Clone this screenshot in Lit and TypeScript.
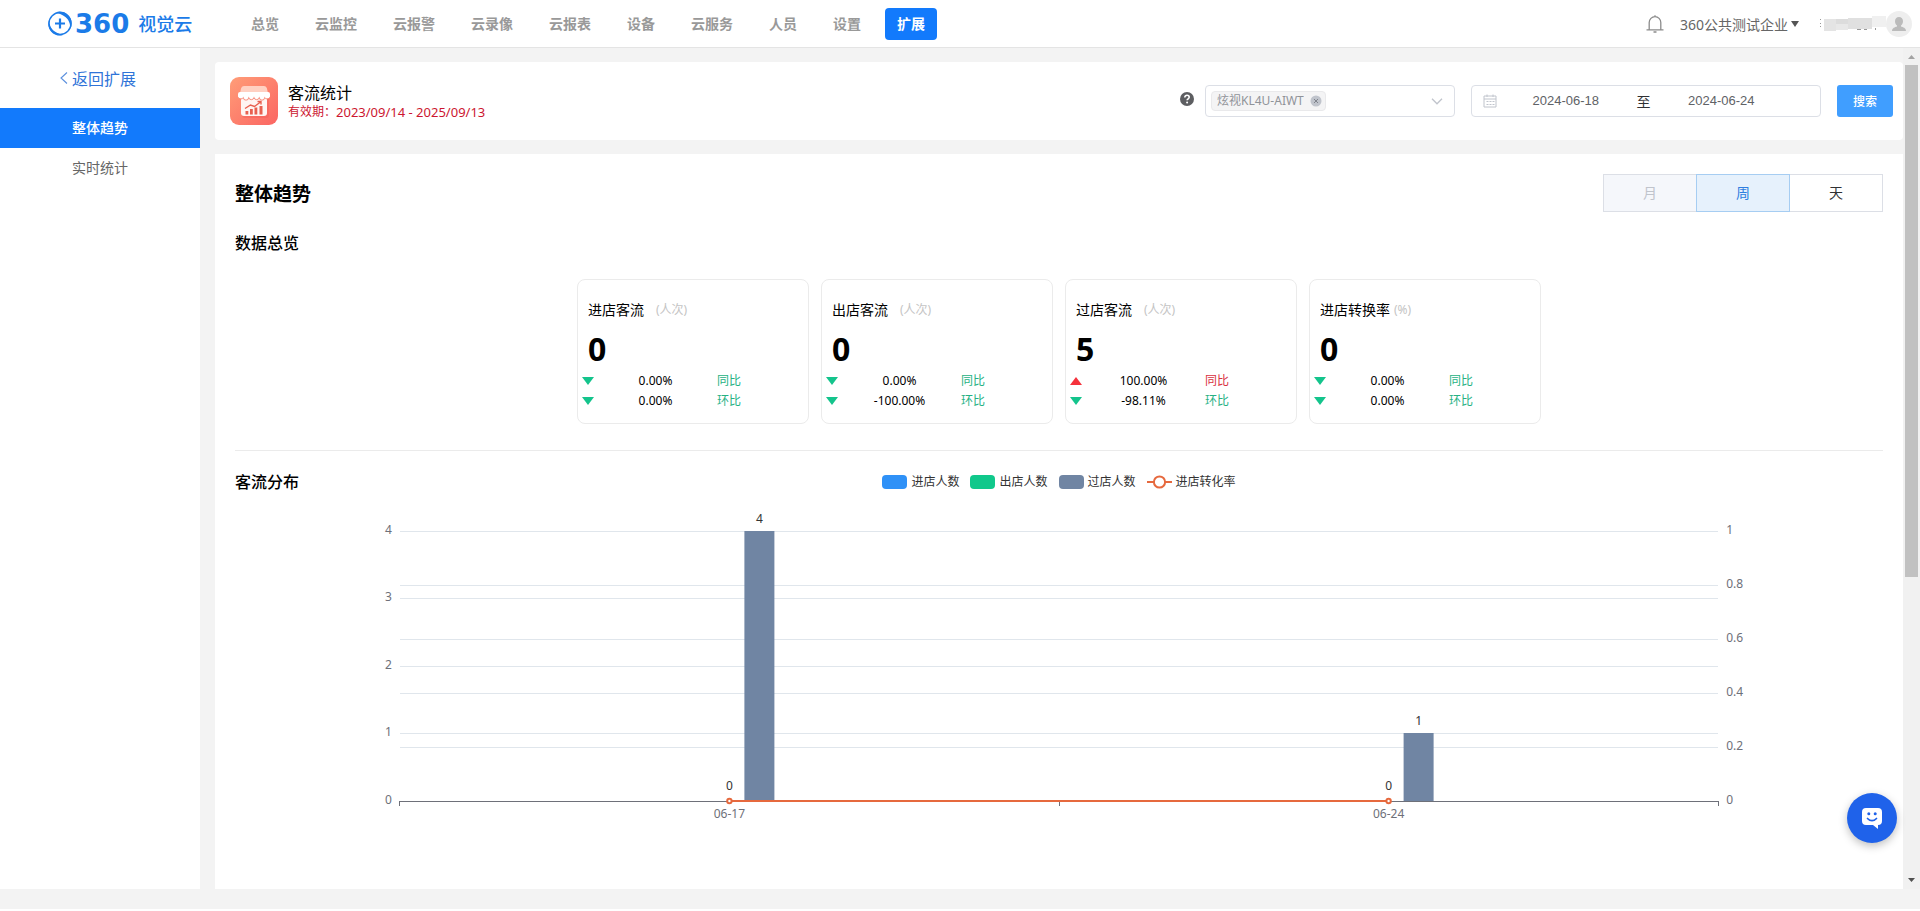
import { LitElement, html, svg, css } from "lit";
import { customElement, property, state } from "lit/decorators.js";
import { classMap } from "lit/directives/class-map.js";

interface Delta {
  dir: "up" | "down";
  value: string;
  label: string;
}

interface Stat {
  name: string;
  unit: string;
  value: string;
  deltas: Delta[];
}

const NAV = ["总览", "云监控", "云报警", "云录像", "云报表", "设备", "云服务", "人员", "设置", "扩展"];

const STATS: Stat[] = [
  {
    name: "进店客流", unit: "(人次)", value: "0",
    deltas: [{ dir: "down", value: "0.00%", label: "同比" }, { dir: "down", value: "0.00%", label: "环比" }],
  },
  {
    name: "出店客流", unit: "(人次)", value: "0",
    deltas: [{ dir: "down", value: "0.00%", label: "同比" }, { dir: "down", value: "-100.00%", label: "环比" }],
  },
  {
    name: "过店客流", unit: "(人次)", value: "5",
    deltas: [{ dir: "up", value: "100.00%", label: "同比" }, { dir: "down", value: "-98.11%", label: "环比" }],
  },
  {
    name: "进店转换率", unit: "(%)", value: "0",
    deltas: [{ dir: "down", value: "0.00%", label: "同比" }, { dir: "down", value: "0.00%", label: "环比" }],
  },
];

/* ---------- summary card ---------- */
@customElement("stat-card")
class StatCard extends LitElement {
  @property({ attribute: false }) stat!: Stat;

  static styles = css`
    :host {
      display: block;
      box-sizing: border-box;
      border: 1px solid #ebebeb;
      border-radius: 8px;
      padding: 20px 0 12px;
      color: #000;
    }
    .head { display: flex; align-items: center; gap: 4px; padding-left: 10px; line-height: 20px; }
    .name { font-size: 14px; min-width: 64px; }
    .unit { font-size: 12px; color: #c4c4c4; }
    .value { margin: 9px 0 2px; padding-left: 10px; font-size: 32px; font-weight: 700; line-height: 40px; }
    .row {
      display: grid;
      grid-template-columns: 12px 123px 1fr;
      align-items: center;
      padding-left: 4px;
      font-size: 12px;
      line-height: 20px;
    }
    .mark { display: block; width: 12px; height: 8px; }
    .pct { text-align: center; }
    .down { color: #25b183; }
    .up { color: #d9303e; }
    .mark.down { color: #14c48c; }
    .mark.up { color: #f5323c; }
  `;

  render() {
    const s = this.stat;
    return html`
      <div class="head"><span class="name">${s.name}</span><span class="unit">${s.unit}</span></div>
      <div class="value">${s.value}</div>
      ${s.deltas.map(
        (d) => html`
          <div class="row">
            <svg class="mark ${d.dir}" viewBox="0 0 12 8" aria-hidden="true">
              <path fill="currentColor" d=${d.dir === "up" ? "M6 0 12 8H0z" : "M0 0H12L6 8z"}></path>
            </svg>
            <span class="pct">${d.value}</span>
            <span class=${d.dir}>${d.label}</span>
          </div>
        `
      )}
    `;
  }
}

/* ---------- bar and line chart ---------- */
@customElement("flow-chart")
class FlowChart extends LitElement {
  @property({ attribute: false }) days = [
    { day: "06-17", passing: 4, rate: 0 },
    { day: "06-24", passing: 1, rate: 0 },
  ];

  static styles = css`
    :host { display: block; }
    .canvas { display: block; width: 100%; height: 366px; }
    .plot { overflow: visible; }
    .grid { stroke: #e0e6ec; shape-rendering: crispEdges; }
    .axis { stroke: #6e7079; shape-rendering: crispEdges; }
    .bar { fill: #7085a3; }
    .line { stroke: #e6693e; stroke-width: 2; }
    .dot { fill: #fff; stroke: #e6693e; stroke-width: 2; }
    .tick { fill: #6e7079; font-size: 12px; }
    .val { fill: #333; font-size: 12px; text-anchor: middle; }
    .end { text-anchor: end; }
    .mid { text-anchor: middle; }
  `;

  render() {
    const H = 270;
    const max = 4;
    const n = this.days.length;
    const left = [0, 1, 2, 3, 4];
    const right = [0, 0.2, 0.4, 0.6, 0.8, 1];
    const at = (i: number) => `${((i + 0.5) / n) * 100}%`;
    const yL = (v: number) => Math.floor(H - (v / max) * H);
    const yR = (v: number) => Math.round(H - v * H);
    const gridLine = (y: number) => svg`<line class="grid" x1="0" x2="100%" y1=${y + 0.5} y2=${y + 0.5}></line>`;
    return html`
      <svg class="canvas" role="img" aria-label="客流分布">
        <svg class="plot" x="10%" y="36" width="80%" height=${H}>
          ${left.slice(1).map((v) => gridLine(yL(v)))}
          ${right.slice(1, -1).map((v) => gridLine(yR(v)))}
          ${this.days.map(
            (d, i) => svg`
              <svg class="plot" x=${at(i)} y="0" width="60" height=${H}>
                <rect class="bar" x="15" width="30" y=${yL(d.passing)} height=${H - yL(d.passing)}></rect>
                <text class="val" x="30" y=${yL(d.passing) - 8}>${d.passing}</text>
                <text class="val" x="0" y=${yR(d.rate) - 11}>${d.rate}</text>
                <text class="tick mid" x="0" y=${H + 17}>${d.day}</text>
              </svg>`
          )}
          <line class="axis" x1="0" x2="100%" y1=${H + 0.5} y2=${H + 0.5}></line>
          ${Array.from({ length: n + 1 }, (_, i) => {
            const x = `${(i / n) * 100}%`;
            return svg`<line class="axis" x1=${x} x2=${x} y1=${H} y2=${H + 5}></line>`;
          })}
          <line class="line" x1=${at(0)} x2=${at(n - 1)} y1=${H} y2=${H}></line>
          ${this.days.map((_, i) => svg`<circle class="dot" cx=${at(i)} cy=${H} r="2.2"></circle>`)}
          ${left.map((v) => svg`<text class="tick end" x="-8" y=${yL(v) + 3}>${v}</text>`)}
          <svg class="plot" x="100%" y="0" width="40" height=${H}>
            ${right.map((v) => svg`<text class="tick" x="8" y=${yR(v) + 3}>${v}</text>`)}
          </svg>
        </svg>
      </svg>
    `;
  }
}

/* ---------- page ---------- */
@customElement("app-root")
class AppRoot extends LitElement {
  @state() period = "周";

  static styles = css`
    :host {
      display: flex;
      flex-direction: column;
      min-height: 100vh;
      box-sizing: border-box;
      border-bottom: 2px solid #fff;
      background: #f3f3f3;
      color: #000;
      font-family: "Noto Sans", "Noto Sans CJK SC", sans-serif;
      font-size: 14px;
    }
    * { box-sizing: border-box; }
    button, input, select { font: inherit; color: inherit; margin: 0; padding: 0; border: 0; background: none; outline: 0; }
    button { cursor: pointer; }
    a { text-decoration: none; color: inherit; }
    svg { display: block; flex: none; }
    h1, h2, h3 { margin: 0; }

    .top { display: flex; align-items: center; height: 48px; background: #fff; border-bottom: 1px solid #e4e4e4; padding: 0 8px 0 48px; }
    .logo { display: flex; align-items: center; width: 191px; color: #1b7be8; line-height: 24px; }
    .digits { font: 700 26px/24px "DejaVu Sans", sans-serif; margin: 0 9px 0 3px; }
    .brand { font-size: 18px; font-weight: 500; }
    .nav { display: flex; gap: 12px; flex: 1; }
    .nav a { height: 32px; line-height: 32px; padding: 0 12px; border-radius: 4px; color: #999; font-weight: 700; }
    .nav .on { background: #127afc; color: #fff; }
    .user { display: flex; align-items: center; color: #666; }
    .org { display: flex; align-items: center; gap: 3px; margin: 0 21px 0 16px; }

    .body { display: flex; flex: 1; margin-bottom: 20px; }
    .side { width: 200px; background: #fff; }
    .back { display: flex; align-items: center; justify-content: center; gap: 4px; height: 60px; font-size: 16px; color: #2f74d8; padding-right: 4px; }
    .item { display: block; height: 40px; line-height: 40px; text-align: center; color: #666; }
    .item.on { background: #127afc; color: #fff; font-weight: 500; }

    .main { display: flex; flex-direction: column; flex: 1; gap: 14px; padding: 14px 0 0 15px; min-width: 0; }
    .bar { display: flex; align-items: center; height: 78px; background: #fff; border-radius: 4px; padding: 0 10px 0 15px; }
    .intro { flex: 1; margin-left: 10px; }
    .intro h1 { font-size: 16px; font-weight: 400; line-height: 22px; }
    .valid { display: flex; align-items: center; font-size: 12px; line-height: 16px; color: #cc1630; }
    .dates { font-size: 13px; }
    .help { margin: 0 11px 4px 0; }

    .picker { display: flex; align-items: center; justify-content: space-between; width: 250px; height: 32px; border: 1px solid #dcdfe6; border-radius: 4px; padding: 0 11px 0 5px; }
    .tag { display: flex; align-items: center; gap: 6px; height: 20px; padding: 0 3px 0 5px; background: #f4f4f5; border: 1px solid #e9e9eb; border-radius: 4px; color: #909399; font-size: 12px; }
    .tag select { appearance: none; line-height: 18px; height: 18px; }
    .range { display: flex; align-items: center; width: 350px; height: 32px; margin: 0 16px; border: 1px solid #dcdfe6; border-radius: 4px; padding: 0 30px 0 11px; color: #606266; }
    .range input { flex: 1; min-width: 0; text-align: center; font: 13px/20px "Liberation Sans", sans-serif; }
    .to { width: 18px; text-align: center; color: #303133; }
    .go { width: 56px; height: 32px; border-radius: 3px; background: #409eff; color: #fff; font-size: 12px; font-weight: 500; }

    .panel { flex: 1; background: #fff; padding: 20px 20px 28px; }
    .title { display: flex; align-items: center; justify-content: space-between; }
    .title h2 { font-size: 19px; line-height: 28px; padding-top: 2px; }
    .periods { display: flex; }
    .periods button { width: 94px; height: 38px; border: 1px solid #dcdfe6; background: #fff; color: #303133; padding-bottom: 2px; }
    .periods button + button { margin-left: -1px; }
    .periods button:disabled { background: #f5f7fb; color: #c0c4cc; }
    .periods .on { position: relative; background: #e6f1fc; border-color: #a6cdf2; color: #2f7ee0; }
    .sub { font-size: 16px; font-weight: 500; line-height: 24px; }
    .overview { margin-top: 19px; }
    .stats { display: grid; grid-template-columns: repeat(4, 232px); justify-content: center; gap: 12px; margin: 24px 0 26px; }
    .dist { display: grid; grid-template-columns: 1fr auto 1fr; align-items: start; border-top: 1px solid #ebebeb; padding-top: 19px; height: 45px; }
    .legend { display: flex; gap: 11px; font-size: 12px; line-height: 24px; color: #333; }
    .key { display: flex; align-items: center; gap: 4px; }
    .swatch { width: 25px; height: 14px; border-radius: 4px; }
    .in { background: #2f91f7; }
    .out { background: #10c88b; }
    .pass { background: #7085a3; }

    .scroll { display: flex; flex-direction: column; width: 17px; background: #f1f1f1; }
    .track { flex: 1; padding: 0 2px; }
    .thumb { background: #c1c1c1; height: 63.4%; }

    .chat {
      position: fixed; right: 23px; bottom: 68px;
      display: flex; align-items: center; justify-content: center;
      width: 50px; height: 50px; border-radius: 50%;
      background: #1f62ea; box-shadow: 0 3px 8px rgba(0, 0, 0, 0.25);
    }
  `;

  renderHeader() {
    return html`
      <header class="top">
        <a class="logo" href="#">
          <svg width="24" height="25" viewBox="0 0 24 25" aria-hidden="true">
            <circle cx="12" cy="12.5" r="11" fill="none" stroke="#1b7be8" stroke-width="1.4"></circle>
            <path fill="#1b7be8" d="M8 1.200C14-1 21 2.500 23.200 9c.8 3 .6 6-.8 9 0-6-2-9.500-5-12C14.500 3.800 11 2.500 8 1.200zM1 9c0 5 2 8.500 5 11 2.500 2 6 3 9 4C9 26 3 22.500 1 17c-1-3-1-5.500 0-8zM10.900 7.500h2.200v3.900H17v2.200h-3.900v3.900h-2.200v-3.900H7v-2.200h3.900z"></path>
          </svg>
          <span class="digits">360</span><span class="brand">视觉云</span>
        </a>
        <nav class="nav">
          ${NAV.map((t) => html`<a href="#" class=${classMap({ on: t === "扩展" })}>${t}</a>`)}
        </nav>
        <div class="user">
          <svg width="18" height="18" viewBox="0 0 18 18" fill="none" stroke="#8c8c8c" stroke-width="1.300" aria-hidden="true">
            <path d="M3.200 14.700V7.500a5.800 5.800 0 0 1 11.600 0v7.200M.5 14.900h17M9 .3v1.500M7.500 17h3"></path>
          </svg>
          <a class="org" href="#">360公共测试企业
            <svg width="8" height="6" viewBox="0 0 8 6" aria-hidden="true"><path fill="#555" d="M0 0h8L4 6z"></path></svg>
          </a>
          <svg width="66" height="16" viewBox="0 0 66 16" aria-hidden="true">
            <path fill="#999" d="M0 3h1v1H0zM0 7h1v1H0zM0 10h1v1H0zM37 13h4v1h-4zM44 13h3v1h-3zM55 12h1v2h-1z"></path>
            <path fill="#e4e4e4" d="M4 3h12v12H4z"></path>
            <path fill="#dcdcdc" d="M16 3h12v5H16z"></path>
            <path fill="#e8e8e8" d="M16 8h12v6H16z"></path>
            <path fill="#e0e0e0" d="M28 2h24v11H28z"></path>
            <path fill="#f0f0f0" d="M52 0h14v11H52z"></path>
          </svg>
          <svg width="26" height="26" viewBox="0 0 26 26" aria-hidden="true">
            <circle cx="13" cy="13" r="13" fill="#eee"></circle>
            <path fill="#bbb" d="M13 6c2.500 0 4 1.800 4 4.200 0 1.800-.8 3.300-2 4.200v1.200c2 .7 5 1.400 5 4.400H6c0-3 3-3.700 5-4.400v-1.200c-1.200-.9-2-2.400-2-4.200C9 7.800 10.500 6 13 6z"></path>
          </svg>
        </div>
      </header>
    `;
  }

  renderFilters() {
    return html`
      <section class="bar">
        <svg width="48" height="48" viewBox="0 0 48 48" aria-hidden="true">
          <defs>
            <linearGradient id="g" x1="0" y1="0" x2="1" y2="1">
              <stop offset="0" stop-color="#ff9d78"></stop><stop offset="1" stop-color="#fb6562"></stop>
            </linearGradient>
          </defs>
          <rect width="48" height="48" rx="9" fill="url(#g)"></rect>
          <path fill="#ffd0c2" d="M14 9h20q2 0 2.800 2L38 16H10l1.200-5Q12 9 14 9z"></path>
          <path fill="#f0564f" opacity=".35" d="M12 22h27v16q0 3-3 3H15q-3 0-3-3z"></path>
          <path fill="#fff5f2" d="M11 20h26v16q0 3-3 3H14q-3 0-3-3z"></path>
          <path fill="#fff" d="M10 15h28q2 0 2 2v2.500a2.700 2.700 0 0 1-5.300 0 2.700 2.700 0 0 1-5.400 0 2.700 2.700 0 0 1-5.300 0 2.700 2.700 0 0 1-5.300 0 2.700 2.700 0 0 1-5.400 0 2.700 2.700 0 0 1-5.300 0V17q0-2 2-2z"></path>
          <path fill="none" stroke="#f47a68" stroke-width=".8" d="M8.500 20.500a2.700 2.700 0 0 0 4.800 0 2.700 2.700 0 0 0 5.400 0 2.700 2.700 0 0 0 5.300 0 2.700 2.700 0 0 0 5.300 0 2.700 2.700 0 0 0 5.400 0 2.700 2.700 0 0 0 4.800 0"></path>
          <path fill="#e8604f" d="M15.500 34h2.800v3.500h-2.800zM20 32h2.800v5.500H20zM24.500 30.500h2.800v7h-2.800zM29.500 29h3v8.500h-3z"></path>
          <path fill="none" stroke="#e8604f" stroke-width="1.400" d="M15 31.500l5.500-3.500 4 1.500 6-4.500M27.500 24.500h3.500v3"></path>
        </svg>
        <div class="intro">
          <h1>客流统计</h1>
          <div class="valid"><span>有效期：</span><span class="dates">2023/09/14 - 2025/09/13</span></div>
        </div>
        <svg class="help" width="14" height="14" viewBox="0 0 14 14" aria-hidden="true">
          <circle cx="7" cy="7" r="7" fill="#5d5e61"></circle>
          <path fill="none" stroke="#fff" stroke-width="1.600" d="M4.800 5.500c0-1.500 1-2.200 2.200-2.200s2.200.7 2.200 2c0 1.500-2.100 1.500-2.100 3"></path>
          <circle cx="7.100" cy="10.400" r="1" fill="#fff"></circle>
        </svg>
        <div class="picker">
          <div class="tag">
            <select aria-label="设备"><option>炫视KL4U-AIWT</option></select>
            <button type="button" aria-label="移除">
              <svg width="12" height="12" viewBox="0 0 12 12">
                <circle cx="6" cy="6" r="5.500" fill="#c0c4cc"></circle>
                <path stroke="#80848c" stroke-width="1" d="M4 4l4 4M8 4l-4 4"></path>
              </svg>
            </button>
          </div>
          <svg width="12" height="7" viewBox="0 0 12 7" aria-hidden="true"><path fill="none" stroke="#c0c4cc" stroke-width="1.300" d="M1 .8l5 5 5-5"></path></svg>
        </div>
        <div class="range">
          <svg width="14" height="14" viewBox="0 0 14 14" fill="none" stroke="#c0c4cc" aria-hidden="true">
            <path d="M1 2h12v11H1zM1 5h12M4 .5V3M10 .5V3M3.500 7.500h2M6.500 7.500h2M9.500 7.500h2M3.500 10.500h2M6.500 10.500h2M9.500 10.500h2"></path>
          </svg>
          <input type="text" aria-label="开始日期" .value=${"2024-06-18"} />
          <span class="to">至</span>
          <input type="text" aria-label="结束日期" .value=${"2024-06-24"} />
        </div>
        <button class="go" type="button">搜索</button>
      </section>
    `;
  }

  render() {
    return html`
      ${this.renderHeader()}
      <div class="body">
        <aside class="side">
          <a class="back" href="#">
            <svg width="8" height="12" viewBox="0 0 8 12" aria-hidden="true"><path fill="none" stroke="#5b90de" stroke-width="1.100" d="M7 .5L1 6l6 5.500"></path></svg>
            返回扩展
          </a>
          <a class="item on" href="#">整体趋势</a>
          <a class="item" href="#">实时统计</a>
        </aside>
        <main class="main">
          ${this.renderFilters()}
          <section class="panel">
            <div class="title">
              <h2>整体趋势</h2>
              <div class="periods">
                ${["月", "周", "天"].map(
                  (p) => html`<button
                    type="button"
                    class=${classMap({ on: p === this.period })}
                    ?disabled=${p === "月"}
                    @click=${() => (this.period = p)}
                  >${p}</button>`
                )}
              </div>
            </div>
            <h3 class="sub overview">数据总览</h3>
            <div class="stats">${STATS.map((s) => html`<stat-card .stat=${s}></stat-card>`)}</div>
            <div class="dist">
              <h3 class="sub">客流分布</h3>
              <div class="legend">
                <span class="key"><i class="swatch in"></i>进店人数</span>
                <span class="key"><i class="swatch out"></i>出店人数</span>
                <span class="key"><i class="swatch pass"></i>过店人数</span>
                <span class="key">
                  <svg width="25" height="14" viewBox="0 0 25 14" fill="none" stroke="#e6693e" stroke-width="2" aria-hidden="true">
                    <path d="M0 7h7M18 7h7"></path><circle cx="12.500" cy="7" r="5.600"></circle>
                  </svg>进店转化率</span>
              </div>
            </div>
            <flow-chart></flow-chart>
          </section>
        </main>
        <div class="scroll" aria-hidden="true">
          <svg width="17" height="17" viewBox="0 0 17 17"><path fill="#a3a3a3" d="M5 11h7L8.500 7z"></path></svg>
          <div class="track"><div class="thumb"></div></div>
          <svg width="17" height="17" viewBox="0 0 17 17"><path fill="#505050" d="M5 6h7l-3.500 4z"></path></svg>
        </div>
      </div>
      <button class="chat" type="button" aria-label="在线客服">
        <svg width="22" height="22" viewBox="0 0 22 22" aria-hidden="true">
          <path fill="#fff" d="M5 1h12q4 0 4 4v9q0 4-4 4v4l-5-4H5q-4 0-4-4V5q0-4 4-4z"></path>
          <circle cx="7.800" cy="6.800" r="1.500" fill="#1f62ea"></circle>
          <circle cx="14.200" cy="6.800" r="1.500" fill="#1f62ea"></circle>
          <path fill="none" stroke="#1f62ea" stroke-width="1.700" stroke-linecap="round" d="M6.500 11.500q4.500 4.500 9 0"></path>
        </svg>
      </button>
    `;
  }
}
